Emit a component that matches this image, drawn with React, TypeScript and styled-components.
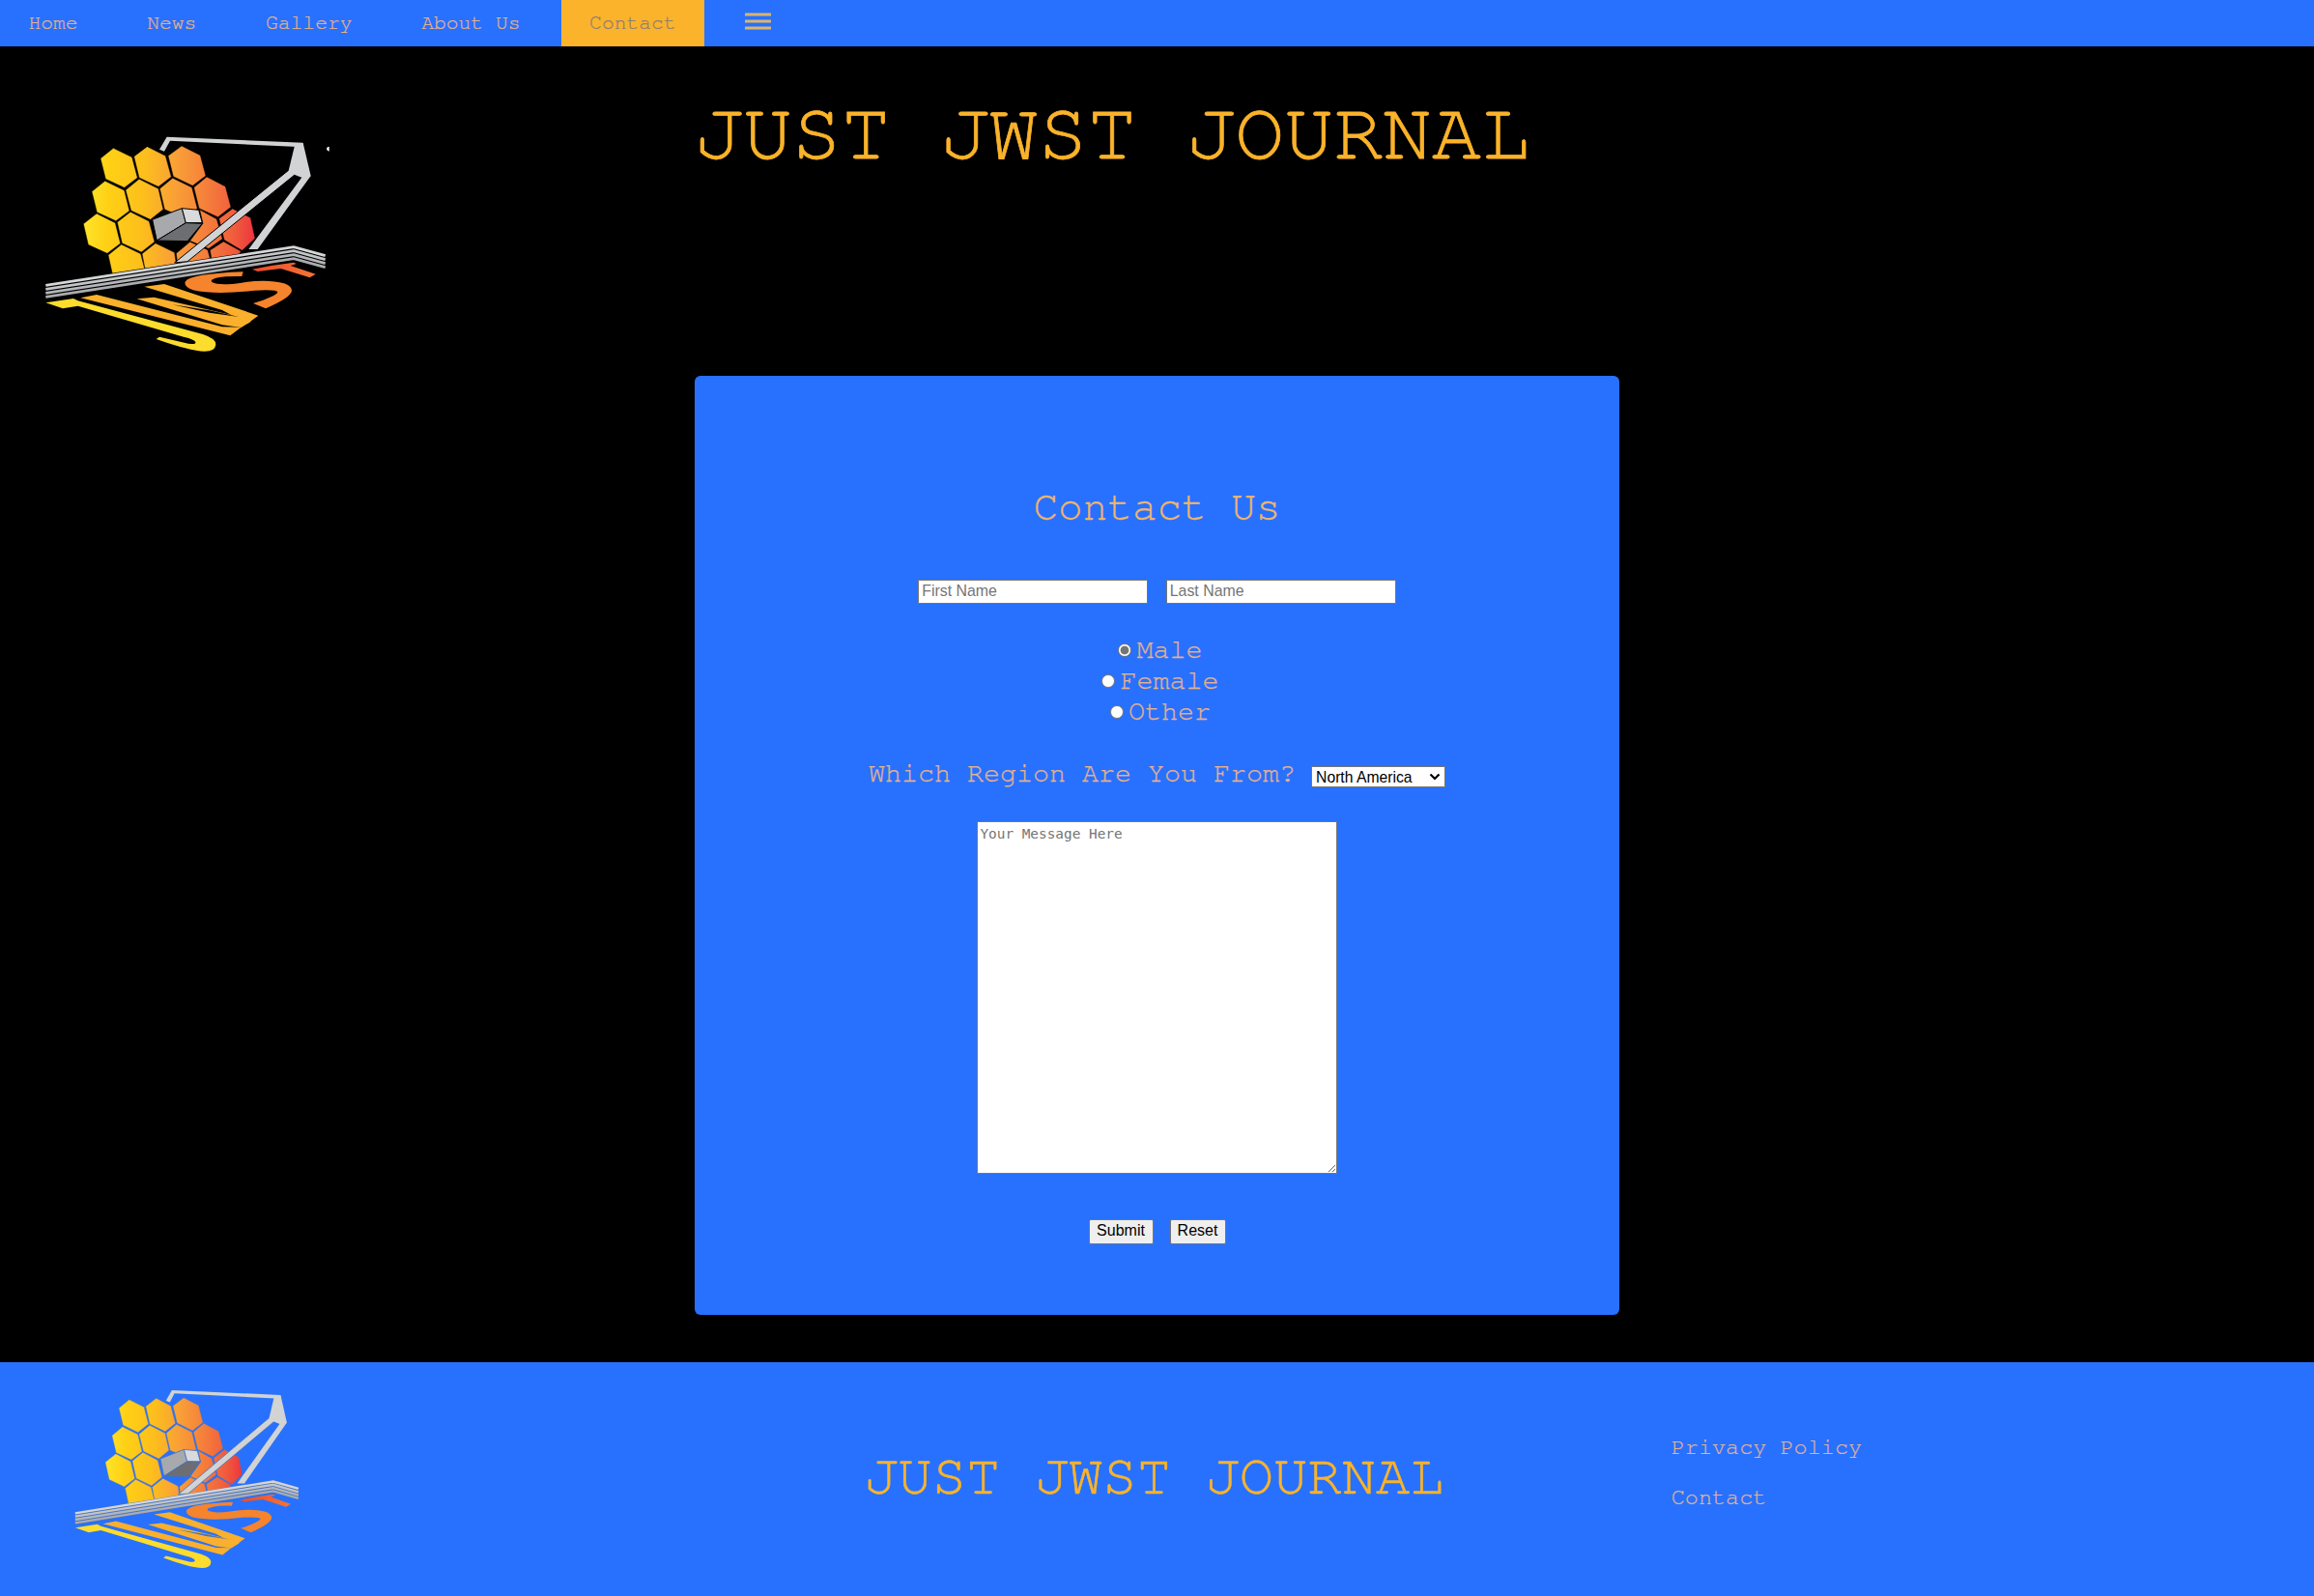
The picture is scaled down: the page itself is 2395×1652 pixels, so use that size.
import React from "react";
import styled, { createGlobalStyle } from "styled-components";

const BLUE = "#2871fe";
const GOLD = "#fab32a";
const TYPEWRITER = `"FreeMono", "Courier New", "Liberation Mono", monospace`;
const SANS = `"Liberation Sans", Arial, sans-serif`;

const GlobalStyle = createGlobalStyle`
  *, *::before, *::after { box-sizing: border-box; }
  html, body { margin: 0; background: #000; }
  body { font-family: ${TYPEWRITER}; color: ${GOLD}; }
`;

const Page = styled.div`
  display: flex;
  flex-direction: column;
  width: 100%;
  min-height: 1652px;
  background: #000;
`;

const Nav = styled.nav`
  display: flex;
  gap: 12.8px;
  height: 48px;
  background: ${BLUE};
`;

const NavLink = styled.a<{ $active?: boolean }>`
  display: flex;
  align-items: center;
  padding: 0 29.4px;
  font-size: 21.33px;
  line-height: 48px;
  white-space: pre;
  text-decoration: none;
  color: ${(p) => (p.$active ? "#8f7c78" : "#e9b287")};
  background: ${(p) => (p.$active ? GOLD : "transparent")};
  -webkit-text-stroke: 0.2px currentColor;
`;

const MenuIcon = styled.svg`
  width: 27px;
  height: 18px;
  margin-bottom: 4px;
`;

const Header = styled.header`
  display: flex;
  align-items: flex-start;
  height: 341px;
  padding: 0 0 0 30px;
`;

const LogoSvg = styled.svg<{ $w: number; $h: number; $top?: number }>`
  display: block;
  flex: none;
  width: ${(p) => p.$w}px;
  height: ${(p) => p.$h}px;
  margin-top: ${(p) => p.$top ?? 0}px;
`;

const Title = styled.h1<{ $size: number }>`
  margin: 0;
  font-size: ${(p) => p.$size}px;
  line-height: 1;
  font-weight: 400;
  white-space: pre;
  color: ${GOLD};
  -webkit-text-stroke: 0.009em currentColor;
`;

const HeaderTitle = styled(Title)`
  margin: 49px 0 0 358px;
`;

const Card = styled.form`
  display: flex;
  flex-direction: column;
  align-items: center;
  align-self: center;
  width: 957px;
  height: 972px;
  padding-top: 115px;
  border-radius: 6px;
  background: ${BLUE};
`;

const Heading = styled.h2`
  margin: 0 0 53px;
  font-size: 42.67px;
  line-height: 43px;
  font-weight: 400;
  color: #eeb56c;
  -webkit-text-stroke: 0.3px currentColor;
`;

const Fields = styled.div`
  display: flex;
  gap: 18.500px;
  margin-bottom: 32px;
`;

const TextInput = styled.input`
  width: 238px;
  height: 25px;
  padding: 0 3px 2px;
  border: 1px solid #767676;
  background: #fff;
  font: 15.9px ${SANS};
  &::placeholder { color: #757575; }
`;

const Radios = styled.div`
  display: flex;
  flex-direction: column;
  align-items: center;
  margin-bottom: 32px;
`;

const formText = `
  font-size: 28.35px;
  line-height: 32px;
  white-space: pre;
  color: #e6b18c;
  -webkit-text-stroke: 0.25px currentColor;
`;

const RadioLabel = styled.label`
  display: flex;
  align-items: center;
  height: 32px;
  ${formText}
`;

const Radio = styled.input`
  appearance: none;
  width: 14px;
  height: 14px;
  margin: 0 5px 0 7px;
  border: 1px solid #767676;
  border-radius: 50%;
  background: #fff;
  &:checked {
    background: radial-gradient(circle, #767676 0 4px, #fff 4.8px);
  }
`;

const RegionRow = styled.div`
  display: flex;
  margin-bottom: 33px;
  height: 32px;
  gap: 16px;
`;

const RegionLabel = styled.label`
  ${formText}
`;

const SelectBox = styled.div`
  display: grid;
  align-self: flex-start;
  margin-top: 8px;
`;

const Select = styled.select`
  grid-area: 1 / 1;
  appearance: none;
  width: 139px;
  height: 22px;
  padding: 0 4px;
  border: 1px solid #767676;
  border-radius: 0;
  background: #fff;
  color: #000;
  font: 15.7px ${SANS};
`;

const Chevron = styled.svg`
  grid-area: 1 / 1;
  place-self: center end;
  width: 12px;
  height: 8px;
  margin-right: 5px;
  pointer-events: none;
`;

const Message = styled.textarea`
  width: 373px;
  height: 365px;
  margin-bottom: 47px;
  padding: 4px 2.4px;
  border: 1px solid #767676;
  background: #fff;
  font: 14.4px/17px "DejaVu Sans Mono", "Liberation Mono", monospace;
  &::placeholder { color: #757575; }
`;

const Buttons = styled.div`
  display: flex;
  gap: 17px;
`;

const Button = styled.button<{ $w: number }>`
  width: ${(p) => p.$w}px;
  height: 26px;
  padding: 0 0 2px;
  border: 1px solid #767676;
  border-radius: 2px;
  background: #efefef;
  color: #000;
  font: 16px ${SANS};
`;

const Footer = styled.footer`
  display: flex;
  height: 242px;
  margin-top: auto;
  padding-left: 63.5px;
  padding-top: 11px;
  background: ${BLUE};
`;

const FooterTitle = styled(Title)`
  margin: 79px 0 0 567px;
`;

const FooterLinks = styled.div`
  display: flex;
  flex-direction: column;
  margin: 51px 0 0 235px;
`;

const FooterLink = styled.a`
  height: 52px;
  font-size: 23.5px;
  line-height: 52px;
  white-space: pre;
  text-decoration: none;
  color: #e4b394;
  -webkit-text-stroke: 0.2px currentColor;
`;

const MIRRORS = [
  "262,100 320,128 337,192 296,223 238,196 222,132",
  "367,95 424,124 442,189 402,220 342,192 326,126",
  "474,93 532,122 549,186 508,217 448,188 432,124",
  "236,202 296,231 312,295 270,326 211,299 195,235",
  "342,196 402,226 417,290 377,322 317,294 300,230",
  "446,193 506,222 523,288 480,316 421,290 406,226",
  "552,189 610,219 627,283 587,314 528,287 512,222",
  "210,303 268,332 284,396 243,427 184,400 169,335",
  "315,298 373,327 390,391 349,423 289,395 274,330",
  "530,291 583,320 601,382 558,412 500,388 540,334",
  "632,288 688,316 702,380 662,418 606,385 590,319",
  "287,399 347,428 362,485 260,495 246,432",
  "393,395 452,424 458,465 362,485 351,428",
  "500,391 555,416 563,445 462,465 457,427",
  "604,390 658,420 650,440 568,450 562,417",
];

const SHIELD = [0, 12, 24, 36];

interface LogoProps {
  id: string;
  width: number;
  height: number;
  top?: number;
  ink: string;
  star?: boolean;
}

function Logo({ id, width, height, top, ink, star }: LogoProps) {
  return (
    <LogoSvg $w={width} $h={height} $top={top} viewBox="0 0 990 780" preserveAspectRatio="none" aria-label="JWST logo">
      <defs>
        <linearGradient id={`${id}-gold`} gradientUnits="userSpaceOnUse" x1="169" y1="350" x2="702" y2="370">
          <stop offset="0" stopColor="#ffe42a" />
          <stop offset="0.14" stopColor="#ffd015" />
          <stop offset="0.34" stopColor="#fdbf1c" />
          <stop offset="0.52" stopColor="#f9a136" />
          <stop offset="0.74" stopColor="#f4793c" />
          <stop offset="0.88" stopColor="#f05c3c" />
          <stop offset="1" stopColor="#ec3440" />
        </linearGradient>
        <linearGradient id={`${id}-t`} gradientUnits="userSpaceOnUse" x1="697" y1="470" x2="888" y2="495">
          <stop offset="0" stopColor="#ee4b2c" />
          <stop offset="1" stopColor="#f37435" />
        </linearGradient>
      </defs>
      <polygon points="405,104 428,65 850,83 852,97 438,77 420,110" fill="#d1d3d4" />
      <g fill={`url(#${id}-gold)`} stroke={ink} strokeWidth="1.500">
        {MIRRORS.map((points) => (
          <polygon key={points} points={points} />
        ))}
      </g>
      <g stroke={ink} strokeWidth="3" strokeLinejoin="round">
        <polygon points="383,322 475,287 487,332 397,387" fill="#a7a9ac" />
        <polygon points="475,287 527,292 538,332 487,332" fill="#d8dadb" />
        <polygon points="397,387 487,332 538,334 492,389" fill="#6d6e71" />
        <polygon points="808,167 826,182 492,452 452,456" fill="#d1d3d4" />
      </g>
      <polygon points="848,190 875,186 710,414 682,414" fill="#d1d3d4" />
      <polygon points="826,88 851,84 875,186 862,197 820,181 806,170" fill="#d1d3d4" />
      <polygon points="52,520 822,402 920,430 920,474 824,446 52,569" fill={ink} />
      {SHIELD.map((dy, i) => (
        <polyline
          key={dy}
          points={`52,${526 + dy} 822,${407 + dy} 920,${434 + dy}`}
          fill="none"
          stroke={["#d4d6d7", "#c3c5c7", "#b4b6b9", "#aaacaf"][i]}
          strokeWidth="8.5"
        />
      ))}
      <path
        d="M52,580 L138,567 L152,574 L540,678 Q582,692 580,710 Q578,731 545,731 Q500,730 395,693 L405,686 L495,707 Q520,711 517,702 Q515,694 480,686 L152,590 L105,598 Z"
        fill="#fcdc2c"
      />
      <g fill="#fab02c">
        <polygon points="160,565 210,555 600,655 659,656 625,682" />
        <polygon points="335,568 388,563 655,624 690,638 659,657 600,649" />
        <polygon points="358,530 420,522 712,620 678,645 600,603" />
      </g>
      <polygon points="446,586 560,604 652,624 560,611" fill={ink} />
      <path
        d="M665,484 L661,498 Q610,497 588,502 Q560,508 568,516 Q590,528 660,518 Q740,506 792,520 Q820,530 815,547 Q805,568 735,598 L696,582 Q765,560 772,548 Q772,538 700,542 Q580,556 510,541 Q480,530 485,515 Q500,490 665,484 Z"
        fill="#f5842c"
      />
      <polygon points="693,476 752,465 822,455 830,459 812,465 890,491 872,502 782,474 710,483" fill={`url(#${id}-t)`} />
      {star && <path d="M932,95 Q924,96 924,102 Q925,108 932,110 Z" fill="#fff" />}
    </LogoSvg>
  );
}

const LINKS = ["Home", "News", "Gallery", "About Us", "Contact"];
const GENDERS = ["Male", "Female", "Other"];

export default function App() {
  return (
    <Page>
      <GlobalStyle />
      <Nav>
        {LINKS.map((name) => (
          <NavLink key={name} $active={name === "Contact"}>
            {name}
          </NavLink>
        ))}
        <NavLink aria-label="Menu">
          <MenuIcon viewBox="0 0 27 18">
            <path d="M0 2h27M0 9h27M0 16h27" stroke="#dcb56a" strokeWidth="3.2" />
          </MenuIcon>
        </NavLink>
      </Nav>
      <Header>
        <Logo id="top" width={330} height={260} top={72} ink="#000" star />
        <HeaderTitle $size={84.9}>JUST JWST JOURNAL</HeaderTitle>
      </Header>
      <Card>
        <Heading>Contact Us</Heading>
        <Fields>
          <TextInput placeholder="First Name" />
          <TextInput placeholder="Last Name" />
        </Fields>
        <Radios>
          {GENDERS.map((name) => (
            <RadioLabel key={name}>
              <Radio type="radio" name="gender" defaultChecked={name === "Male"} />
              {name}
            </RadioLabel>
          ))}
        </Radios>
        <RegionRow>
          <RegionLabel>Which Region Are You From?</RegionLabel>
          <SelectBox>
            <Select>
              <option>North America</option>
            </Select>
            <Chevron viewBox="0 0 12 8">
              <path d="M1.5 1.5 6 6l4.5-4.5" fill="none" stroke="#000" strokeWidth="2.2" />
            </Chevron>
          </SelectBox>
        </RegionRow>
        <Message placeholder="Your Message Here" />
        <Buttons>
          <Button type="button" $w={67}>Submit</Button>
          <Button type="button" $w={58}>Reset</Button>
        </Buttons>
      </Card>
      <Footer>
        <Logo id="bottom" width={263.5} height={215.6} ink="#4573c4" />
        <FooterTitle $size={58.9}>JUST JWST JOURNAL</FooterTitle>
        <FooterLinks>
          <FooterLink>Privacy Policy</FooterLink>
          <FooterLink>Contact</FooterLink>
        </FooterLinks>
      </Footer>
    </Page>
  );
}
